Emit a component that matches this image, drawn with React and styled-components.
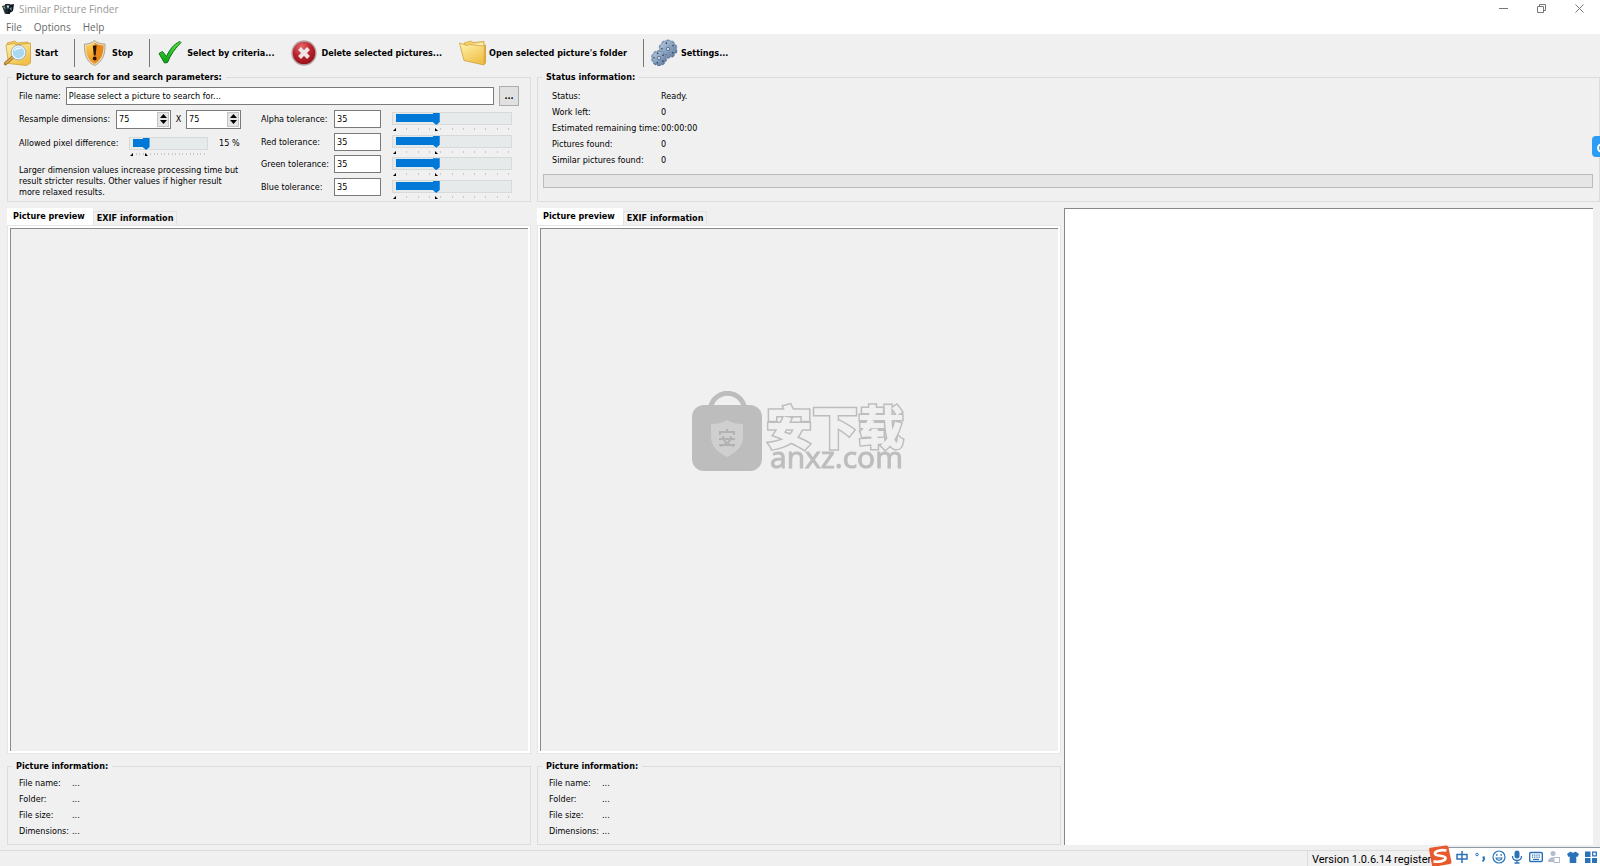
import React, { useId, useState } from "react";
import styled, { createGlobalStyle } from "styled-components";

const GlobalStyle = createGlobalStyle`
  :root {
    --face: #f0f0f0;
    --line: #dcdcdc;
    --edge: #7a7a7a;
    --accent: #0078d7;
    --ime: #2a72b8;
    --ui: "DejaVu Sans Condensed", "DejaVu Sans", sans-serif;
    --shell: "Open Sans", "Noto Sans", sans-serif;
  }

  *, *::before, *::after { box-sizing: border-box; }

  body {
    margin: 0;
    background: var(--face);
    color: #000;
    font: 9px/12px var(--ui);
    overflow: hidden;
  }

  button, input { font: inherit; color: inherit; }
`;

const Window = styled.div`
  min-height: 100vh;
  display: flex;
  flex-direction: column;
`;

/* ---------- title bar and menu ---------- */

const TitleBar = styled.header`
  display: flex;
  align-items: center;
  height: 18px;
  padding: 0 2px;
  background: #fff;
  font: 10px/18px var(--shell);
  color: #999;
`;

const AppTitle = styled.h1`
  flex: 1;
  margin: 0 0 0 5px;
  font: inherit;
`;

const CaptionButton = styled.button`
  display: flex;
  align-items: center;
  justify-content: center;
  width: 38px;
  height: 18px;
  padding: 0 0 2px;
  border: 0;
  background: none;
  color: #777;
`;

const MenuBar = styled.nav`
  display: flex;
  gap: 12px;
  height: 16px;
  padding-left: 6px;
  background: #fff;
`;

const MenuButton = styled.button`
  padding: 0;
  border: 0;
  background: none;
  font: 10px/18px var(--shell);
  color: #666;
`;

/* ---------- toolbar ---------- */

const Toolbar = styled.div`
  display: flex;
  align-items: center;
  height: 36px;
  padding: 1px 0 0 4px;
`;

const ToolButton = styled.button`
  display: flex;
  align-items: center;
  gap: 3px;
  padding: 0 16px 0 0;
  border: 0;
  background: none;
  font-weight: 700;
  white-space: nowrap;
`;

const Separator = styled.span`
  width: 1px;
  height: 28px;
  margin-right: 6px;
  background: #777;
`;

/* ---------- shared pieces ---------- */

const Main = styled.main`
  flex: 1;
  display: grid;
  grid-template-columns: 524fr 6px 524fr 3px 529fr;
  grid-template-rows: auto 1fr auto;
  padding: 0 7px 5px;
`;

const Group = styled.fieldset`
  grid-column: ${(p) => p.$column};
  min-width: 0;
  margin: ${(p) => (p.$bleed ? "0 -7px 0 0" : "0")};
  padding: 0 4px;
  border: 1px solid var(--line);

  legend {
    padding: 0 4px;
    font-weight: 700;
    line-height: 14px;
  }
`;

const Facts = styled.dl`
  display: grid;
  grid-template-columns: ${(p) => p.$label}px 1fr;
  margin: 0;
  padding: ${(p) => p.$pad};
  line-height: 16px;
  white-space: nowrap;

  dd { margin: 0; }
`;

/* ---------- search parameters ---------- */

const SearchBody = styled.div`
  padding: 2px 7px 3px;
`;

const FileRow = styled.div`
  display: flex;
  align-items: center;
  gap: 5px;
  height: 20px;
`;

const TextBox = styled.input`
  flex: ${(p) => (p.$grow ? 1 : "none")};
  width: 47px;
  min-width: 0;
  height: 18px;
  padding: 0 2px;
  border: 1px solid var(--edge);
  background: #fff;
`;

const BrowseButton = styled.button`
  width: 20px;
  height: 20px;
  padding: 0;
  border: 1px solid #adadad;
  background: #e1e1e1;
  font-weight: 700;
`;

const Parameters = styled.div`
  display: flex;
  align-items: flex-start;
  gap: 20px;
  margin-top: 4px;
`;

const Dimensions = styled.div`
  width: 222px;
`;

const DimensionRow = styled.div`
  display: flex;
  align-items: center;
  height: 18px;

  label { width: 97px; }
  b { width: 15px; font-weight: 400; text-align: center; }
`;

const DifferenceRow = styled.div`
  display: flex;
  align-items: flex-start;
  gap: 11px;
  height: 28px;
  margin-top: 7px;

  label { width: 99px; line-height: 16px; white-space: nowrap; }
  output { line-height: 16px; }
`;

const Hint = styled.p`
  margin: 2px 0 0;
  line-height: 11px;
  white-space: nowrap;
`;

const SpinBox = styled.span`
  display: flex;
  align-items: center;
  width: 55px;
  height: 19px;
  padding: 1px;
  border: 1px solid var(--edge);
  background: #fff;

  input {
    flex: 1;
    min-width: 0;
    padding: 0 1px;
    border: 0;
    outline: 0;
    background: none;
  }
`;

const SpinButtons = styled.span`
  display: flex;
  flex-direction: column;
  width: 12px;
  height: 15px;
  border: 1px solid #c4c4c4;
  background: #e6e6e6;

  button {
    flex: 1;
    display: flex;
    align-items: center;
    justify-content: center;
    padding: 0;
    border: 0;
    background: none;
  }
`;

const Tolerances = styled.div`
  display: flex;
  flex-direction: column;
  justify-content: space-between;
  min-height: 86px;
`;

const ToleranceRow = styled.div`
  display: flex;
  align-items: center;
  height: 18px;

  label { width: 73px; white-space: nowrap; }
`;

const SliderBox = styled.span`
  display: flex;
  flex-direction: column;
  width: ${(p) => p.$width}px;
  height: 18px;
  margin-left: ${(p) => p.$gap}px;

  svg { flex: none; overflow: visible; }
`;

const Range = styled.input.attrs({ type: "range" })`
  appearance: none;
  flex: none;
  width: 100%;
  height: 13px;
  margin: 2px 0 3px;
  padding: 0 3px;
  border: 1px solid #d6dadb;
  background: #e7eaea;

  &::-webkit-slider-runnable-track {
    height: 11px;
    background: linear-gradient(var(--accent), var(--accent)) 0 1px / var(--fill) 8px no-repeat;
  }

  &::-webkit-slider-thumb {
    appearance: none;
    width: 7px;
    height: 12px;
    background: var(--accent);
    clip-path: polygon(0 0, 100% 0, 100% 75%, 50% 100%, 0 75%);
  }
`;

/* ---------- status ---------- */

const ProgressTrack = styled.div`
  height: 14px;
  margin: 6px 2px 0 1px;
  border: 1px solid #bcbcbc;
  background: #e6e6e6;
`;

/* ---------- preview panes ---------- */

const Pane = styled.section`
  grid-column: ${(p) => p.$column};
  display: flex;
  flex-direction: column;
  margin: 6px 0 5px;
`;

const TabList = styled.div`
  display: flex;
  align-items: flex-end;
  height: 17px;
`;

const Tab = styled.button`
  height: ${(p) => (p.$active ? 17 : 14)}px;
  padding: ${(p) => (p.$active ? "0 7px 1px 5px" : "0 3px")};
  border: 1px solid ${(p) => (p.$active ? "#fff" : "#e2e2e2")};
  border-bottom: 0;
  background: ${(p) => (p.$active ? "#fff" : "var(--face)")};
  font-weight: 700;
  line-height: 13px;
  white-space: nowrap;
`;

const TabPanel = styled.div`
  flex: 1;
  padding: 2px;
  border: 1px solid #e6e6e6;
  background: #fff;
`;

const Preview = styled.div`
  height: 100%;
  border: solid #8a8a8a;
  border-width: 1px 0 0 1px;
  background: var(--face);
`;

const Results = styled.section`
  grid-column: 5;
  grid-row: 2 / 4;
  margin-top: 6px;
  border: solid #888;
  border-width: 1px 0 0 1px;
  background: #fff;
`;

/* ---------- status bar and things floating over the window ---------- */

const StatusBar = styled.footer`
  display: flex;
  justify-content: flex-end;
  height: 16px;
  border-top: 1px solid var(--line);
  font: 11px/17px Roboto, var(--shell);

  span {
    width: 293px;
    padding-left: 4px;
    border-left: 1px solid var(--line);
  }
`;

const ImeBar = styled.div`
  position: fixed;
  right: 0;
  bottom: 0;
  display: flex;
  align-items: center;
  justify-content: space-between;
  width: 166px;
  height: 19px;
  padding: 0 2px 0 21px;
  border-top: 1px solid #8d99a6;
  background: #fff;
  color: var(--ime);

  button {
    display: flex;
    padding: 0;
    border: 0;
    background: none;
  }
`;

const ImeLogo = styled.svg`
  position: absolute;
  left: -6px;
  bottom: -1px;
`;

const SideHandle = styled.button`
  position: fixed;
  top: 136px;
  right: 0;
  width: 8px;
  height: 21px;
  padding: 0;
  border: 0;
  border-radius: 4px 0 0 4px;
  background: #2b9df4;
  overflow: hidden;

  svg { display: block; }
`;

const Watermark = styled.div`
  position: fixed;
  top: 50%;
  left: 50%;
  display: flex;
  gap: 4px;
  transform: translate(-50%, -50%);
  margin: -2px 0 0 -2px;
  color: #bdbdbd;
  pointer-events: none;
`;

const WatermarkText = styled.div`
  display: flex;
  flex-direction: column;
  padding-top: 10px;
`;

const WatermarkName = styled.span`
  font: 900 46px/46px "Noto Sans CJK SC", sans-serif;
  color: var(--face);
  paint-order: stroke fill;
  stroke-linejoin: round;
  -webkit-text-stroke: 3px #bdbdbd;
`;

const WatermarkSite = styled.span`
  padding-left: 4px;
  font: 30px/20px var(--shell);
  -webkit-text-stroke: 1px #bdbdbd;
`;

/* ---------- icons ---------- */

const SharedGradients = () => (
  <svg width="0" height="0" aria-hidden="true">
    <defs>
      <linearGradient id="folder" x1="0" y1="0" x2=".6" y2="1">
        <stop offset="0" stopColor="#fff3b0" />
        <stop offset="1" stopColor="#f0c048" />
      </linearGradient>
      <linearGradient id="shield" x1="0" y1="0" x2="0" y2="1">
        <stop offset="0" stopColor="#ffd75e" />
        <stop offset="1" stopColor="#f08a18" />
      </linearGradient>
      <linearGradient id="tick" x1="0" y1="0" x2="0" y2="1">
        <stop offset="0" stopColor="#5be33e" />
        <stop offset="1" stopColor="#0a9e18" />
      </linearGradient>
      <radialGradient id="cross" cx=".4" cy=".25" r=".8">
        <stop offset="0" stopColor="#e06a6c" />
        <stop offset=".5" stopColor="#bd2229" />
        <stop offset="1" stopColor="#8e0f18" />
      </radialGradient>
      <linearGradient id="steel" x1="0" y1="0" x2="1" y2="1">
        <stop offset="0" stopColor="#b9cce2" />
        <stop offset="1" stopColor="#5d799c" />
      </linearGradient>
    </defs>
  </svg>
);

const AppIcon = () => (
  <svg width="12" height="12" viewBox="0 0 12 12">
    <path d="m0 3 4-1 2 8-3 1z" fill="#2b3340" />
    <path d="M3 1h5v10H4z" fill="#1d2730" />
    <path d="m6 2 6-1-1 7-5 3z" fill="#10161c" />
    <path d="M4.500 2.500h3L6 6z" fill="#bfe0e8" />
    <path d="m1 4 2-.5.500 3z" fill="#7fb05a" />
    <path d="m7.500 5.500 2-1.500v4z" fill="#5f9cc0" />
  </svg>
);

const SearchFolderIcon = () => (
  <svg width="28" height="28" viewBox="0 0 28 28">
    <path d="m3 4 8-2 2 2 11-1v9L6 14z" fill="#f0c95c" stroke="#cf9f36" strokeWidth=".7" />
    <path d="M2 6 10 4.500l2 1.500 14.500-2v20l-4 2.500-18-2z" fill="url(#folder)" stroke="#cf9f36" strokeWidth=".8" />
    <path d="m9 18-7.500 6.500" stroke="#a8752c" strokeWidth="3.600" strokeLinecap="round" />
    <path d="m9 18-7 6" stroke="#e5b35a" strokeWidth="1.600" strokeLinecap="round" />
    <circle cx="14.500" cy="13.500" r="6.600" fill="#a9d8f2" stroke="#eef4f8" strokeWidth="1.800" />
    <circle cx="14.500" cy="13.500" r="7.400" fill="none" stroke="#8795a0" strokeWidth=".7" />
    <path d="M10 12.500c1-4 5-5 8-3-3 0-6 1-8 3z" fill="#f2fbff" />
  </svg>
);

const ShieldIcon = () => (
  <svg width="28" height="28" viewBox="0 0 28 28">
    <path d="M13.500 1.500C11 4 7.500 5 3.500 5c-.5 10 2 18 10 21.500C21.500 23 24.500 15 24 5c-4 0-8-1-10.500-3.500z" fill="#e6dcc4" stroke="#a3946f" strokeWidth=".8" />
    <path d="M13.500 3.500C11.500 5.500 8.500 6.500 5 6.500c0 8.500 2 15 8.500 18.500z" fill="url(#shield)" />
    <path d="M13.500 3.500c2 2 5.500 3 9 3 0 8.500-2.500 15-9 18.500z" fill="#e8861a" />
    <path d="M11.800 6.500h3.800l-1 10h-1.800z" fill="#2c1405" />
    <circle cx="13.700" cy="19.500" r="1.900" fill="#2c1405" />
  </svg>
);

const TickIcon = () => (
  <svg width="28" height="28" viewBox="0 0 28 28">
    <path d="m3 14.500 3.500-2 4 5C13.500 10.500 18 5 24 2.500l1 1C19 9.500 15 15 11.500 23.500L8.500 24z" fill="url(#tick)" stroke="#087512" strokeWidth="1" strokeLinejoin="round" />
  </svg>
);

const CrossIcon = () => (
  <svg width="28" height="28" viewBox="0 0 28 28">
    <circle cx="14" cy="14" r="12" fill="url(#cross)" stroke="#b5a9a9" strokeWidth="1.400" />
    <path d="m9.500 9.500 9 9m0-9-9 9" stroke="#eee6e6" strokeWidth="4" />
  </svg>
);

const FolderIcon = () => (
  <svg width="28" height="28" viewBox="0 0 28 28">
    <path d="m6 4 7-2 2 1.500L26 2.500v10L8 14z" fill="#f3d069" stroke="#cf9f36" strokeWidth=".7" />
    <path d="m8 6 17-2 1 14-17 2z" fill="#fff4bf" />
    <path d="M1.500 4 9 6.500 11.500 5.500 26.500 7l-.5 19L6 21.500z" fill="url(#folder)" stroke="#cf9f36" strokeWidth=".8" />
    <path d="M26.500 5 28 6v18l-2 2z" fill="#d9a93d" />
  </svg>
);

const Gear = ({ cx, cy, r }) => (
  <g transform={`translate(${cx} ${cy})`}>
    {Array.from({ length: 10 }, (_, i) => (
      <rect key={i} x="-1.600" y={-r - 1} width="3.200" height="3" rx=".6" fill={i > 2 && i < 7 ? "#56709a" : "#8ba3c0"} transform={`rotate(${i * 36})`} />
    ))}
    <circle r={r} fill="url(#steel)" stroke="#617b9c" strokeWidth=".6" />
    {[20, 92, 164, 236, 308].map((angle) => (
      <circle key={angle} cy={r * 0.72} r=".8" fill="#2d3f57" transform={`rotate(${angle})`} />
    ))}
    <circle r="1.600" fill="#dfe8f2" stroke="#4a6283" strokeWidth=".8" />
  </g>
);

const GearsIcon = () => (
  <svg width="28" height="28" viewBox="0 0 28 28">
    <Gear cx={18} cy={10} r={8.5} />
    <Gear cx={9} cy={19} r={7} />
  </svg>
);

const SogouLogo = () => (
  <ImeLogo width="24" height="22" viewBox="0 0 24 22">
    <path d="M1 4.500Q1 3 2.500 2.700L18 .4q2-.2 2.400 1.600L23.500 17q.2 1.600-1.400 2L6 21.800q-1.600.2-2-1.400z" fill="#e8592b" />
    <path d="M18.500 5.500C13 4.500 6.500 6 7 8.800c.5 2.700 10 1.200 10.500 4.200.4 2.800-6.500 4.400-12 3.400" fill="none" stroke="#fff" strokeWidth="2.700" />
  </ImeLogo>
);

const ImeIcon = ({ children, muted }) => (
  <svg width="14" height="14" viewBox="0 0 14 14" fill="none" stroke={muted ? "#b4bccb" : "currentColor"} strokeWidth="1.500">
    {children}
  </svg>
);

const IME_TOOLS = [
  ["Chinese input", <path d="M2 4.500h10v4.500H2zM7 1v12" />],
  ["Punctuation", <><circle cx="4" cy="4.500" r="1.300" strokeWidth="1" /><path d="M9.500 7.500h1.500v2l-1.500 2" strokeWidth="1.800" /></>],
  ["Emoji", <><circle cx="7" cy="7" r="6" strokeWidth="1.200" /><path d="M4 8c1 3.200 5 3.200 6 0z" strokeWidth="1.100" /><path d="M4.800 4.200v1.500M9.200 4.200v1.500" /></>],
  ["Voice", <><rect x="4.500" y=".5" width="5" height="8" rx="2.500" fill="currentColor" stroke="none" /><path d="M2.500 6c0 6 9 6 9 0M7 10.500V13M4.500 13h5" strokeWidth="1.300" /></>],
  ["Keyboard", <><rect x=".7" y="2.500" width="12.600" height="9" rx="1" strokeWidth="1.400" /><path d="M3 5.200h8M3 7.200h8" strokeDasharray="1 .8" strokeWidth="1.300" /><path d="M4 9.400h6" strokeWidth="1.200" /></>],
  ["Account", <><circle cx="6" cy="3.500" r="2.500" fill="#b4bccb" stroke="none" /><path d="M1 12c0-6 9-6 9-1v1z" fill="#b4bccb" stroke="none" /><rect x="7" y="7.500" width="5.500" height="5" fill="#fff" strokeWidth="1" /></>],
  ["Skin", <path d="M4.500 1.500 1 4l1.500 3 1.200-.6V13h6.600V6.400l1.200.6L13 4 9.500 1.500C8.500 3 5.500 3 4.500 1.500z" fill="currentColor" stroke="none" />],
  ["Toolbox", <><path d="M1 1.500h5.500V7H1zM1 8h5.500v5H1zM8 8h5v5H8z" fill="currentColor" stroke="none" /><path d="M8.700 2.200h3.600v3.600H8.700z" strokeWidth="1.300" /></>],
];

/* ---------- components ---------- */

const Slider = ({ id, label, width, gap, ticks, value, onChange }) => {
  // the thumb's centre travels between the padded ends of the track
  const thumb = Math.round(7 + ((width - 15) * value) / 100);
  return (
    <SliderBox $width={width} $gap={gap}>
      <Range
        id={id}
        aria-label={label}
        value={value}
        onChange={(e) => onChange(Number(e.target.value))}
        style={{ "--fill": `${value}%` }}
      />
      <svg width={width} height="3" viewBox={`0 0 ${width} 3`}>
        {Array.from({ length: ticks + 1 }, (_, i) => (
          <rect key={i} x={Math.round(3 + ((width - 7) * i) / ticks)} y="0" width="1" height="2" fill="#c8c8c8" />
        ))}
        <path d="M4 0v3H1z" />
        <path d={`M${thumb - 1} 0l3 3h-3z`} />
      </svg>
    </SliderBox>
  );
};

const Spinner = ({ id, label, initial }) => {
  const [value, setValue] = useState(initial);
  return (
    <SpinBox>
      <input id={id} aria-label={label} value={value} onChange={(e) => setValue(Number(e.target.value) || 0)} />
      <SpinButtons>
        <button type="button" aria-label="Increase" onClick={() => setValue(value + 1)}>
          <svg width="7" height="4"><path d="M0 4h7L3.500 0z" /></svg>
        </button>
        <button type="button" aria-label="Decrease" onClick={() => setValue(value - 1)}>
          <svg width="7" height="4"><path d="M0 0h7L3.500 4z" /></svg>
        </button>
      </SpinButtons>
    </SpinBox>
  );
};

const Tolerance = ({ name }) => {
  const id = useId();
  const [value, setValue] = useState(35);
  return (
    <ToleranceRow>
      <label htmlFor={id}>{name} tolerance:</label>
      <TextBox id={id} value={value} onChange={(e) => setValue(Number(e.target.value) || 0)} />
      <Slider label={`${name} tolerance`} width={120} gap={11} ticks={10} value={value} onChange={setValue} />
    </ToleranceRow>
  );
};

const SearchGroup = () => {
  const [difference, setDifference] = useState(15);
  return (
    <Group $column={1}>
      <legend>Picture to search for and search parameters:</legend>
      <SearchBody>
        <FileRow>
          <label htmlFor="file">File name:</label>
          <TextBox id="file" $grow defaultValue="Please select a picture to search for..." />
          <BrowseButton type="button">...</BrowseButton>
        </FileRow>
        <Parameters>
          <Dimensions>
            <DimensionRow>
              <label htmlFor="resample">Resample dimensions:</label>
              <Spinner id="resample" initial={75} />
              <b>X</b>
              <Spinner label="Resample height" initial={75} />
            </DimensionRow>
            <DifferenceRow>
              <label htmlFor="difference">Allowed pixel difference:</label>
              <Slider id="difference" width={79} gap={0} ticks={20} value={difference} onChange={setDifference} />
              <output htmlFor="difference">{difference} %</output>
            </DifferenceRow>
            <Hint>
              Larger dimension values increase processing time but<br />
              result stricter results. Other values if higher result<br />
              more relaxed results.
            </Hint>
          </Dimensions>
          <Tolerances>
            {["Alpha", "Red", "Green", "Blue"].map((name) => <Tolerance key={name} name={name} />)}
          </Tolerances>
        </Parameters>
      </SearchBody>
    </Group>
  );
};

const STATUS = [
  ["Status:", "Ready."],
  ["Work left:", "0"],
  ["Estimated remaining time:", "00:00:00"],
  ["Pictures found:", "0"],
  ["Similar pictures found:", "0"],
];

const INFO = ["File name:", "Folder:", "File size:", "Dimensions:"].map((label) => [label, "..."]);

const FactList = ({ items, label, pad }) => (
  <Facts $label={label} $pad={pad}>
    {items.map(([term, value]) => (
      <React.Fragment key={term}>
        <dt>{term}</dt>
        <dd>{value}</dd>
      </React.Fragment>
    ))}
  </Facts>
);

const PreviewPane = ({ column }) => (
  <Pane $column={column}>
    <TabList role="tablist">
      <Tab role="tab" aria-selected="true" $active>Picture preview</Tab>
      <Tab role="tab" aria-selected="false">EXIF information</Tab>
    </TabList>
    <TabPanel role="tabpanel"><Preview /></TabPanel>
  </Pane>
);

const InfoGroup = ({ column }) => (
  <Group $column={column}>
    <legend>Picture information:</legend>
    <FactList items={INFO} label={53} pad="2px 0 5px 7px" />
  </Group>
);

const App = () => (
  <Window>
    <GlobalStyle />
    <TitleBar>
      <AppIcon />
      <AppTitle>Similar Picture Finder</AppTitle>
      <CaptionButton aria-label="Minimize">
        <svg width="9" height="9" stroke="currentColor"><path d="M0 4.500h9" /></svg>
      </CaptionButton>
      <CaptionButton aria-label="Restore">
        <svg width="9" height="9" stroke="currentColor" fill="none"><path d="M.5 2.500h6v6h-6zM2.500 2.500v-2h6v6h-2" /></svg>
      </CaptionButton>
      <CaptionButton aria-label="Close">
        <svg width="9" height="9" stroke="currentColor"><path d="m.5.5 8 8m0-8-8 8" /></svg>
      </CaptionButton>
    </TitleBar>
    <MenuBar>
      <MenuButton>File</MenuButton>
      <MenuButton>Options</MenuButton>
      <MenuButton>Help</MenuButton>
    </MenuBar>

    <Toolbar>
      <ToolButton><SearchFolderIcon />Start</ToolButton>
      <Separator />
      <ToolButton><ShieldIcon />Stop</ToolButton>
      <Separator />
      <ToolButton><TickIcon />Select by criteria...</ToolButton>
      <ToolButton><CrossIcon />Delete selected pictures...</ToolButton>
      <ToolButton><FolderIcon />Open selected picture's folder</ToolButton>
      <Separator />
      <ToolButton><GearsIcon />Settings...</ToolButton>
    </Toolbar>

    <Main>
      <SearchGroup />
      <Group $column="3 / 6" $bleed>
        <legend>Status information:</legend>
        <FactList items={STATUS} label={109} pad="4px 0 0 10px" />
        <ProgressTrack role="progressbar" aria-valuenow={0} aria-label="Search progress" />
      </Group>
      <PreviewPane column={1} />
      <PreviewPane column={3} />
      <Results aria-label="Results" />
      <InfoGroup column={1} />
      <InfoGroup column={3} />
    </Main>

    <StatusBar><span>Version 1.0.6.14 registered</span></StatusBar>

    <Watermark>
      <svg width="70" height="80" viewBox="0 0 70 80">
        <path d="M18 18C22-3 49-3 53 18" fill="none" stroke="#bdbdbd" strokeWidth="5" />
        <rect y="14" width="70" height="66" rx="12" fill="#bdbdbd" />
        <path d="M35 29c5 3 10 4 16 4v13c0 10-8 16-16 20-8-4-16-10-16-20V33c6 0 11-1 16-4z" fill="#cfcfcf" />
        <path d="M35 38v3M28 44v-3h14v3M27 48h16M31 45c0 7 6 9 11 10M39 45c0 7-6 9-11 10M27 54h16" fill="none" stroke="#b2b2b2" strokeWidth="2" />
      </svg>
      <WatermarkText>
        <WatermarkName lang="zh">安下载</WatermarkName>
        <WatermarkSite>anxz.com</WatermarkSite>
      </WatermarkText>
    </Watermark>

    <SideHandle aria-label="Open side panel">
      <svg width="8" height="21"><circle cx="9.500" cy="12" r="3.500" fill="none" stroke="#fff" strokeWidth="2" /></svg>
    </SideHandle>

    <ImeBar>
      <SogouLogo />
      {IME_TOOLS.map(([name, shape]) => (
        <button key={name} type="button" aria-label={name}>
          <ImeIcon muted={name === "Account"}>{shape}</ImeIcon>
        </button>
      ))}
    </ImeBar>
    <SharedGradients />
  </Window>
);

export default App;
